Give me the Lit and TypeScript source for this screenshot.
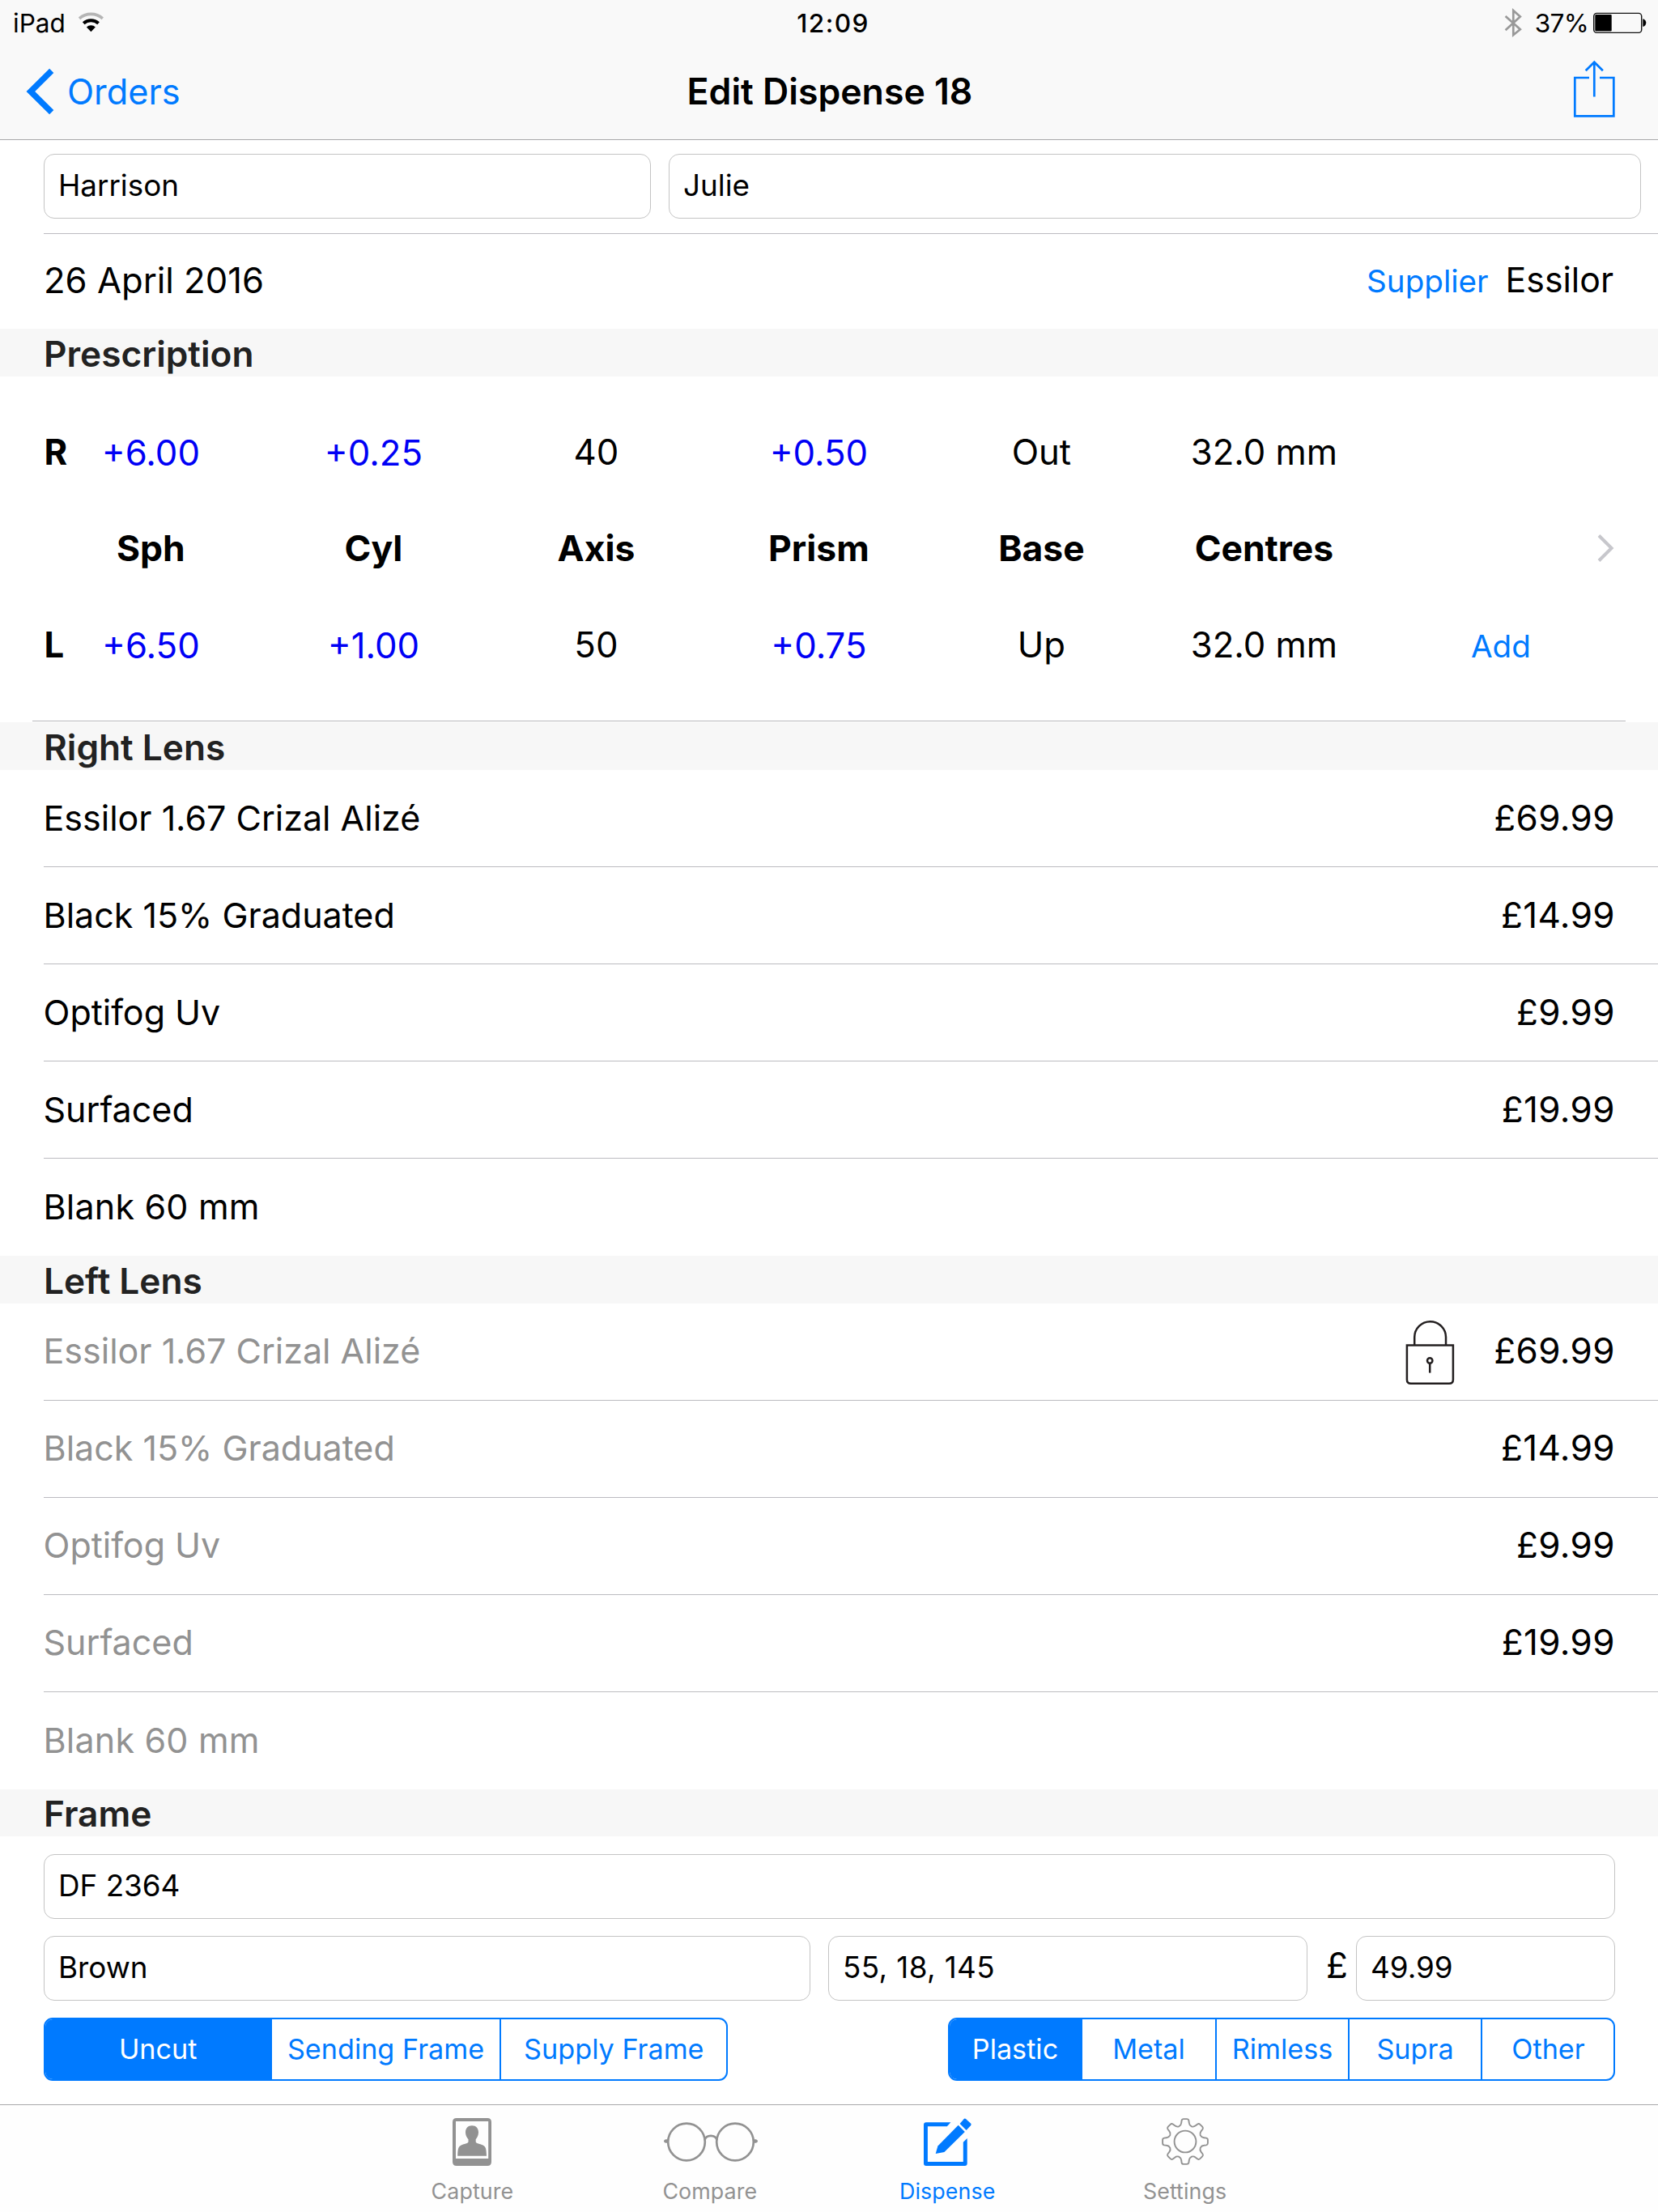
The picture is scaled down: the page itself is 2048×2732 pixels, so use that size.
import { LitElement, html, css, nothing } from 'lit';
import { customElement } from 'lit/decorators.js';
import { classMap } from 'lit/directives/class-map.js';

interface LensItem {
  label: string;
  price?: string;
  locked?: boolean;
}

const LENS_ITEMS: LensItem[] = [
  { label: 'Essilor 1.67 Crizal Alizé', price: '£69.99' },
  { label: 'Black 15% Graduated', price: '£14.99' },
  { label: 'Optifog Uv', price: '£9.99' },
  { label: 'Surfaced', price: '£19.99' },
  { label: 'Blank 60 mm' },
];

const RX_COLUMNS = ['Sph', 'Cyl', 'Axis', 'Prism', 'Base', 'Centres'];
const RX_RIGHT = ['+6.00', '+0.25', '40', '+0.50', 'Out', '32.0 mm'];
const RX_LEFT = ['+6.50', '+1.00', '50', '+0.75', 'Up', '32.0 mm'];

/* Outline of an eight-toothed cog, centred on the origin. */
function cogPath(): string {
  const turn = (x: number, y: number, a: number) => {
    const c = Math.cos(a);
    const s = Math.sin(a);
    return `${(x * c - y * s).toFixed(2)} ${(x * s + y * c).toFixed(2)}`;
  };
  let d = '';
  for (let i = 0; i < 8; i++) {
    const a = (i * Math.PI) / 4;
    const p = (x: number, y: number) => turn(x, y, a);
    d += `${i === 0 ? 'M' : 'L'}${p(-7.6, -18.8)}`;
    d += `C${p(-5.6, -19.8)} ${p(-5, -21)} ${p(-4.8, -23)}`;
    d += `L${p(-4.4, -26)}Q${p(-4, -27.9)} ${p(-2, -27.9)}`;
    d += `L${p(2, -27.9)}Q${p(4, -27.9)} ${p(4.4, -26)}`;
    d += `L${p(4.8, -23)}C${p(5, -21)} ${p(5.6, -19.8)} ${p(7.6, -18.8)}`;
  }
  return d + 'Z';
}

const wifiIcon = html`<svg class="wifi" width="33" height="26" viewBox="0 0 33 26" fill="none">
  <path d="M2 8.8A21.9 21.9 0 0 1 30.8 8.8" stroke="#b5b5b5" stroke-width="3.6" />
  <path d="M7.2 14.7A14 14 0 0 1 25.6 14.7" stroke="#000" stroke-width="4" />
  <path d="M10.9 19.4A8 8 0 0 1 21.9 19.4L16.4 25.3Z" fill="#000" />
</svg>`;

const bluetoothIcon = html`<svg class="bluetooth" width="22" height="37" viewBox="0 0 22 37" fill="none">
  <path d="M1.6 10L19.8 26.2L11.3 33.2V3L19.8 10.6L1.6 27.3" stroke="#999" stroke-width="2.7" />
</svg>`;

const batteryIcon = html`<svg class="battery" width="67" height="27" viewBox="0 0 67 27" fill="none">
  <rect x="1.7" y="1.4" width="59" height="24" rx="3.6" stroke="#111" stroke-width="1.4" />
  <rect x="3.3" y="3" width="20.4" height="20.6" rx="1" fill="#000" />
  <path d="M62.3 8.4H63.5Q66.3 10 66.3 13T63.5 17.7H62.3Z" fill="#000" />
</svg>`;

const backIcon = html`<svg class="back-icon" width="36" height="58" viewBox="0 0 36 58" fill="none">
  <path d="M31.7 3.3L5.8 29L31.7 54.7" stroke="#007aff" stroke-width="7.4" />
</svg>`;

const shareIcon = html`<svg class="share" width="53" height="72" viewBox="0 0 53 72" fill="none">
  <path
    d="M20 22H2.3V69.3H50.3V22H33M26.3 45.5V3M15.7 13.3L26.3 2.7L36.9 13.3"
    stroke="#007aff"
    stroke-width="2.7"
  />
</svg>`;

const lockIcon = html`<svg class="lock" width="61" height="81" viewBox="0 0 61 81" fill="none">
  <g stroke="#231f20" stroke-width="2.5">
    <path d="M1.9 31.5H58.9V74Q58.9 78.8 54 78.8H6.8Q1.9 78.8 1.9 74Z" />
    <path d="M11.2 31.5V21.6A19.4 19.4 0 0 1 50 21.6V31.5" />
    <circle cx="30.2" cy="50.5" r="3.2" />
    <path d="M30.2 53.6V65.6" />
  </g>
</svg>`;

const disclosureIcon = html`<svg class="disclosure" width="22" height="36" viewBox="0 0 22 36" fill="none">
  <path d="M3 2.5L18.6 18L3 33.5" stroke="#c7c7cc" stroke-width="4" />
</svg>`;

const captureIcon = html`<svg width="48" height="59" viewBox="0 0 48 59">
  <path
    fill="#929292"
    fill-rule="evenodd"
    d="M5 0H43Q48 0 48 5V54Q48 59 43 59H5Q0 59 0 54V5Q0 0 5 0ZM4 4V50H44.2V4Z"
  />
  <path
    fill="#929292"
    d="M24 9.3C29 9.3 32 12.8 32 17.6C32 20.8 30.8 24 28.7 26.2V29.6C29.6 31.6 33.6 31.9 37 33.2C40.8 34.7 41.8 37.4 42 46.8H6.2C6.4 37.4 7.4 34.7 11.2 33.2C14.6 31.9 18.6 31.6 19.5 29.6V26.2C17.3 24 16 20.8 16 17.6C16 12.8 19 9.3 24 9.3Z"
  />
</svg>`;

const compareIcon = html`<svg width="118" height="52" viewBox="-2 0 118 52" fill="none">
  <g stroke="#929292" stroke-width="2.7">
    <circle cx="28" cy="26.5" r="22.8" />
    <circle cx="88" cy="26.5" r="22.8" />
    <path d="M50.5 24C52.4 17.2 63.6 17.2 65.5 24" />
  </g>
  <path
    fill="#929292"
    d="M2.4 23.2H6V27.8H2.4Q0 27.4 0 25.5T2.4 23.2ZM113.6 23.2H110V27.8H113.6Q116 27.4 116 25.5T113.6 23.2Z"
  />
</svg>`;

const dispenseIcon = html`<svg width="59" height="59" viewBox="0 0 59 59" fill="#007aff">
  <path
    d="M33.4 5.3L28.8 10.2H4.9V54.1H48.8V29.8L53.7 25V56Q53.7 59 50.7 59H3Q0 59 0 56V8.3Q0 5.3 3 5.3Z"
  />
  <path d="M14.7 44L17.4 34.4L42.7 8.8L50.8 16.9L25.4 42Z" />
  <path d="M44.6 6.9L49.6 1.2Q50.8 0 52.2 1.2L58 6.6Q59.2 7.8 58 9.2L52.6 14.9Z" />
</svg>`;

const settingsIcon = html`<svg width="60" height="60" viewBox="-30 -30 60 60" fill="none">
  <g stroke="#929292" stroke-width="1.9" stroke-linejoin="round">
    <path d=${cogPath()} />
    <circle r="13.4" />
  </g>
</svg>`;

@customElement('app-root')
export class AppRoot extends LitElement {
  static styles = css`
    :host {
      display: block;
      width: 2048px;
      height: 2732px;
      background: #fff;
      color: #000;
      font-family: Inter, 'Liberation Sans', sans-serif;
      font-size: 43.6px;
      line-height: 54px;
      white-space: nowrap;
    }
    * {
      box-sizing: border-box;
    }
    svg {
      display: block;
      flex: none;
    }
    .screen {
      display: flex;
      flex-direction: column;
      height: 2732px;
    }
    .top {
      height: 173px;
      background: #f9f9f9;
      border-bottom: 1px solid #a8a8aa;
    }
    .status {
      display: grid;
      grid-template-columns: 1fr auto 1fr;
      align-items: center;
      height: 57px;
      padding: 0 14px 0 16px;
      font-size: 31.6px;
    }
    .carrier,
    .power {
      display: flex;
      align-items: center;
    }
    .power {
      justify-content: flex-end;
    }
    .wifi {
      margin: -3px 0 0 15px;
    }
    .clock {
      font-weight: 500;
      letter-spacing: 1.4px;
      padding-left: 8px;
    }
    .bluetooth {
      margin-right: 16px;
    }
    .percent {
      letter-spacing: -0.7px;
      margin-right: 5px;
    }
    .nav {
      display: grid;
      grid-template-columns: 1fr auto 1fr;
      align-items: center;
      height: 112px;
      padding: 0 52px 0 32px;
    }
    .back {
      display: flex;
      align-items: center;
      color: #007aff;
      font-size: 43.3px;
    }
    .back-icon {
      margin-right: 15px;
    }
    .title {
      font-size: 44.6px;
      font-weight: 600;
      margin-left: 22px;
    }
    .share {
      justify-self: end;
      margin-top: -7px;
    }
    .names {
      display: flex;
      gap: 22px;
      height: 116px;
      padding: 17px 21px 0 54px;
    }
    .rule {
      height: 1px;
      margin: -1px 0 0 54px;
      background: #bcbbc0;
    }
    .field {
      display: flex;
      align-items: center;
      height: 80px;
      padding: 0 17px 2px;
      border: 1px solid #c4c4c4;
      border-radius: 13px;
      background: #fff;
      font-size: 36.8px;
    }
    .surname {
      width: 750px;
    }
    .forename {
      flex: 1;
    }
    .order {
      display: flex;
      justify-content: space-between;
      align-items: center;
      height: 117px;
      padding: 0 55px 2px 54px;
    }
    .supplier {
      display: flex;
      align-items: baseline;
      gap: 21px;
      font-size: 42.8px;
    }
    .link {
      color: #007aff;
      font-size: 38.6px;
    }
    .band {
      display: flex;
      align-items: center;
      flex: none;
      height: 59px;
      padding: 2px 0 0 54px;
      background: #f7f7f7;
      color: #222;
      font-size: 44.2px;
      font-weight: 600;
    }
    .band.frame-band {
      height: 58px;
    }
    .rx {
      display: grid;
      grid-template-columns: 41.5px 183px 46px repeat(5, 275px) 12px 283px;
      grid-template-rows: 119.5px 117.5px 121px;
      align-items: center;
      justify-items: center;
      height: 425px;
      padding: 34px 0 0 53.4px;
      font-size: 43.7px;
    }
    .rx .eye {
      grid-column: 1;
      justify-self: start;
      padding-left: 1px;
      font-weight: 700;
    }
    .rx .value {
      padding-top: 1px;
    }
    .rx .head {
      font-weight: 700;
      font-size: 44.4px;
    }
    .rx .first {
      grid-column: 2;
    }
    .rx .second {
      grid-column: 4;
    }
    .rx .signed {
      color: #0000f5;
      padding-top: 3px;
    }
    .rx .disclosure {
      grid-column: 10;
      justify-self: end;
    }
    .rx .add {
      grid-column: 10;
      padding: 2px 0 0 3px;
    }
    .rx-rule {
      height: 1px;
      margin: 0 40px 1px;
      background: #b8b8bb;
    }
    .item {
      display: flex;
      align-items: center;
      height: 119px;
      padding: 0 53px 2px 53.5px;
      font-size: 43px;
    }
    .item + .rule {
      margin-top: 0;
    }
    .item.last {
      height: 120px;
      padding-bottom: 3px;
      letter-spacing: 0.2px;
    }
    .item.muted {
      padding-bottom: 3px;
    }
    .item.muted .label {
      color: #929292;
    }
    .label {
      flex: 1;
    }
    .price {
      font-size: 44px;
      letter-spacing: 0.4px;
    }
    .lock {
      margin: 4px 48px 0 0;
    }
    .frame {
      display: grid;
      grid-template-rows: 80px 80px 78px;
      gap: 21px;
      height: 331px;
      padding: 22px 53px 0 54px;
    }
    .line {
      display: flex;
    }
    .colour {
      width: 947px;
      margin-right: 22px;
    }
    .size {
      width: 592px;
      letter-spacing: 0.4px;
    }
    .currency {
      flex: 1;
      padding: 10px 0 0 23px;
      font-size: 44px;
      line-height: 52px;
    }
    .cost {
      width: 320px;
    }
    .line.choices {
      justify-content: space-between;
    }
    .segments {
      display: grid;
      grid-auto-flow: column;
      grid-auto-columns: 1fr;
      border: 2px solid #007aff;
      border-radius: 11px;
      overflow: hidden;
      color: #007aff;
      font-size: 34.2px;
    }
    .segments.work {
      width: 845px;
    }
    .segments.material {
      width: 824px;
    }
    .segment {
      display: flex;
      min-width: 0;
      align-items: center;
      justify-content: center;
    }
    .segment + .segment {
      border-left: 2px solid #007aff;
    }
    .segment.on {
      padding-right: 2px;
      background: #007aff;
      color: #fff;
    }
    .segment.on + .segment {
      border-left: 0;
    }
    .segment:last-child {
      padding-left: 1px;
    }
    .tabs {
      display: flex;
      justify-content: center;
      height: 133px;
      padding-right: 1px;
      border-top: 1px solid #a8a8aa;
      background: #fefefe;
    }
    .tab {
      display: flex;
      flex-direction: column;
      align-items: center;
      width: 293.4px;
      padding-top: 14px;
      color: #929292;
      font-size: 26.8px;
      line-height: 32px;
      letter-spacing: 0.1px;
    }
    .tab.on {
      color: #007aff;
    }
    .glyph {
      display: flex;
      align-items: center;
      height: 62px;
      margin-bottom: 14px;
    }
  `;

  private rxRow(values: string[], kind: 'head' | 'value') {
    return values.map(
      (v, i) => html`<span
        class=${classMap({
          head: kind === 'head',
          value: kind === 'value',
          first: i === 0,
          second: i === 1,
          signed: v.startsWith('+'),
        })}
        >${v}</span
      >`,
    );
  }

  private lens(title: string, items: LensItem[], muted: boolean) {
    return html`
      <div class="band">${title}</div>
      ${items.map((item, i) => {
        const last = i === items.length - 1;
        return html`<div class=${classMap({ item: true, muted, last })}>
            <span class="label">${item.label}</span>
            ${item.locked ? lockIcon : nothing}
            ${item.price ? html`<span class="price">${item.price}</span>` : nothing}
          </div>
          ${last ? nothing : html`<div class="rule"></div>`}`;
      })}
    `;
  }

  private segments(kind: string, options: string[]) {
    return html`<div class="segments ${kind}">
      ${options.map((o, i) => html`<span class=${classMap({ segment: true, on: i === 0 })}>${o}</span>`)}
    </div>`;
  }

  private tab(label: string, icon: unknown, on = false) {
    return html`<div class=${classMap({ tab: true, on })}>
      <div class="glyph">${icon}</div>
      <span>${label}</span>
    </div>`;
  }

  render() {
    return html`<div class="screen">
      <header class="top">
        <div class="status">
          <div class="carrier"><span>iPad</span>${wifiIcon}</div>
          <span class="clock">12:09</span>
          <div class="power">${bluetoothIcon}<span class="percent">37%</span>${batteryIcon}</div>
        </div>
        <div class="nav">
          <div class="back">${backIcon}<span>Orders</span></div>
          <span class="title">Edit Dispense 18</span>
          ${shareIcon}
        </div>
      </header>

      <div class="names">
        <div class="field surname">Harrison</div>
        <div class="field forename">Julie</div>
      </div>
      <div class="rule"></div>
      <div class="order">
        <span>26 April 2016</span>
        <div class="supplier"><span class="link">Supplier</span><span>Essilor</span></div>
      </div>

      <div class="band">Prescription</div>
      <div class="rx">
        <span class="eye">R</span>${this.rxRow(RX_RIGHT, 'value')}
        ${this.rxRow(RX_COLUMNS, 'head')}${disclosureIcon}
        <span class="eye">L</span>${this.rxRow(RX_LEFT, 'value')}
        <span class="link add">Add</span>
      </div>
      <div class="rx-rule"></div>

      ${this.lens('Right Lens', LENS_ITEMS, false)}
      ${this.lens(
        'Left Lens',
        LENS_ITEMS.map((item, i) => ({ ...item, locked: i === 0 })),
        true,
      )}

      <div class="band frame-band">Frame</div>
      <div class="frame">
        <div class="field">DF 2364</div>
        <div class="line">
          <div class="field colour">Brown</div>
          <div class="field size">55, 18, 145</div>
          <span class="currency">£</span>
          <div class="field cost">49.99</div>
        </div>
        <div class="line choices">
          ${this.segments('work', ['Uncut', 'Sending Frame', 'Supply Frame'])}
          ${this.segments('material', ['Plastic', 'Metal', 'Rimless', 'Supra', 'Other'])}
        </div>
      </div>

      <nav class="tabs">
        ${this.tab('Capture', captureIcon)} ${this.tab('Compare', compareIcon)}
        ${this.tab('Dispense', dispenseIcon, true)} ${this.tab('Settings', settingsIcon)}
      </nav>
    </div>`;
  }
}
